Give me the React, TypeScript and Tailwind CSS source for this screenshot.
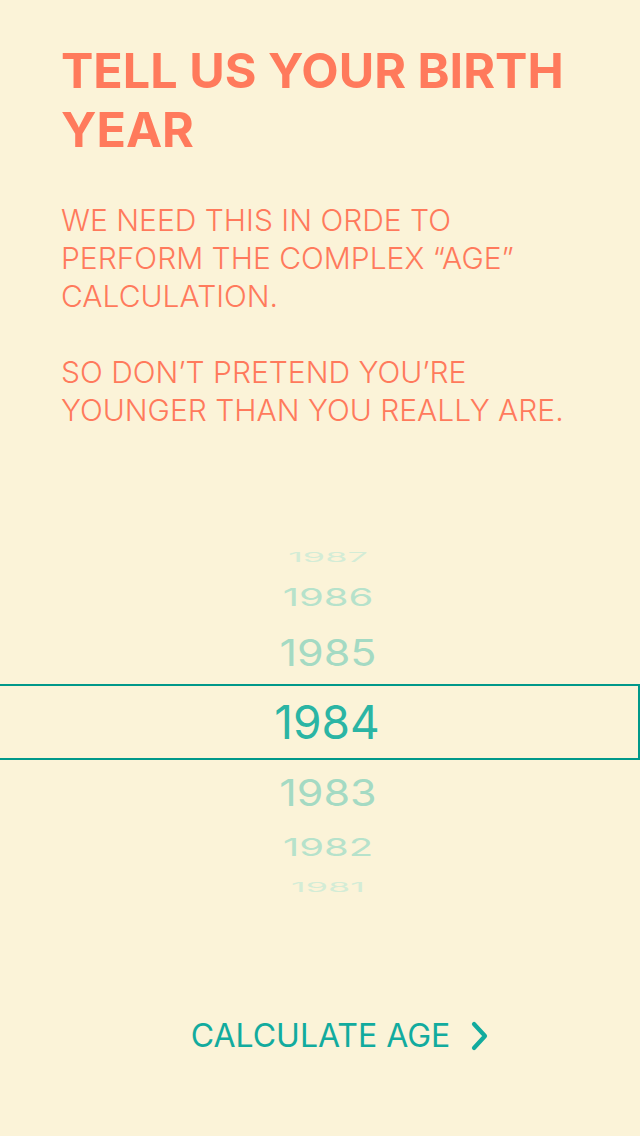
const above = [
  { year: 1987, row: "h-[34px]", text: "text-[36px] scale-y-[0.35] text-[#d3ecd6]" },
  { year: 1986, row: "h-[46px]", text: "text-[40px] scale-y-[0.62] text-[#b6e2cb]" },
  { year: 1985, row: "h-[64px]", text: "text-[43px] scale-y-[0.86] text-[#a4dac3]" },
];

const below = [
  { year: 1983, row: "h-[64px]", text: "text-[43px] scale-y-[0.86] text-[#a4dac3]" },
  { year: 1982, row: "h-[46px]", text: "text-[40px] scale-y-[0.62] text-[#b6e2cb]" },
  { year: 1981, row: "h-[34px]", text: "text-[36px] scale-y-[0.35] text-[#d3ecd6]" },
];

function WheelRow({ year, row, text }: { year: number; row: string; text: string }) {
  return (
    <div className={`flex items-center justify-center pl-[16px] ${row}`}>
      <span className={`leading-none ${text}`}>{year}</span>
    </div>
  );
}

export default function App() {
  return (
    <div
      className="flex flex-col min-h-[1136px] w-[640px] bg-[#fbf3d8] overflow-hidden"
      style={{ fontFamily: "Inter, 'Noto Sans', sans-serif" }}
    >
      <div className="px-[61px] pt-[41px]">
        <h1 className="text-[48.5px] leading-[59px] font-bold text-[#ff7a5c]">
          TELL US YOUR BIRTH YEAR
        </h1>
        <p className="mt-[42px] text-[30px] leading-[38px] font-light text-[#ff7a5c]">
          WE NEED THIS IN ORDE TO PERFORM THE COMPLEX “AGE” CALCULATION.
        </p>
        <p className="mt-[38px] text-[30px] leading-[38px] font-light text-[#ff7a5c]">
          SO DON’T PRETEND YOU’RE YOUNGER THAN YOU REALLY ARE.
        </p>
      </div>

      <div className="mt-[111px] flex flex-col">
        {above.map((r) => (
          <WheelRow key={r.year} {...r} />
        ))}
        <div className="flex items-center justify-center pl-[16px] h-[76px] border-y-2 border-r-2 border-[#00988a]">
          <span className="text-[46px] leading-none text-[#2bb5a4]">1984</span>
        </div>
        {below.map((r) => (
          <WheelRow key={r.year} {...r} />
        ))}
      </div>

      <button className="mt-[116px] self-center flex items-center gap-[21px] pl-[40px] text-[32px] leading-none text-[#12ab9e]">
        CALCULATE AGE
        <svg width="18" height="30" viewBox="0 0 18 30" fill="none">
          <polyline
            points="3,3 14,15 3,27"
            stroke="#12ab9e"
            strokeWidth="4.2"
            strokeLinecap="round"
            strokeLinejoin="round"
          />
        </svg>
      </button>
    </div>
  );
}
